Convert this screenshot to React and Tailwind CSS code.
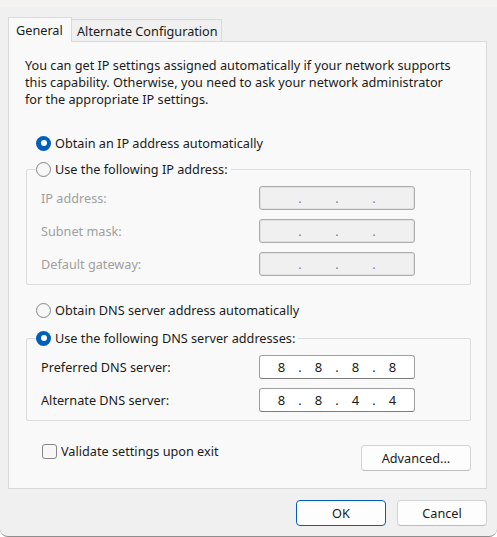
const FONT = "font-['Noto_Sans','DejaVu_Sans',sans-serif] text-[12.7px] leading-[16px] text-[#1b1b1b]";

function Radio({ checked }) {
  return checked ? (
    <span className="w-[15px] h-[15px] rounded-full bg-[#005fb8] flex items-center justify-center shrink-0">
      <span className="w-[6px] h-[6px] rounded-full bg-white" />
    </span>
  ) : (
    <span className="w-[15px] h-[15px] rounded-full border border-[#868686] bg-[#f7f7f7] shrink-0" />
  );
}

function RadioRow({ checked, label }) {
  return (
    <div className="flex items-center gap-[4px] h-[16px]">
      <Radio checked={checked} />
      <span>{label}</span>
    </div>
  );
}

function IpBox({ value, disabled }) {
  const parts = value || ['', '', '', ''];
  return (
    <div
      className={
        'w-[156px] h-[24px] rounded-[3px] border flex items-center justify-center ' +
        (disabled
          ? 'bg-[#f0f0f0] border-[#acacac] shadow-[inset_0_0_0_1px_#e2e2e2]'
          : 'bg-white border-[#9f9f9f] border-b-[#7c7c7c]')
      }
    >
      {parts.map((p, i) => (
        <div key={i} className="flex">
          {i > 0 && (
            <span className={'w-[17px] text-center ' + (disabled ? 'text-[#7a7a9a]' : 'text-[#1b1b1b]')}>.</span>
          )}
          <span className="w-[20px] text-center text-[13px]">{p}</span>
        </div>
      ))}
    </div>
  );
}

function Field({ label, value, disabled }) {
  return (
    <div className="flex items-center">
      <span className={'w-[218px] ' + (disabled ? 'text-[#a0a0a0]' : '')}>{label}</span>
      <IpBox value={value} disabled={disabled} />
    </div>
  );
}

function Group({ legend, checked, children }) {
  return (
    <fieldset className="ml-[17px] w-[445px] border border-[#dcdcdc] rounded-[2px]">
      <legend className="ml-[9px] pr-[3px]">
        <RadioRow checked={checked} label={legend} />
      </legend>
      <div className="pl-[14px] pt-[9px] pb-[8px] flex flex-col gap-[9px]">{children}</div>
    </fieldset>
  );
}

function Button({ children, primary, className = '' }) {
  return (
    <button
      className={
        'h-[26px] rounded-[4px] bg-[#fdfdfd] border flex items-center justify-center ' +
        (primary ? 'border-[#005fb8]' : 'border-[#d3d3d3] border-b-[#bcbcbc]') +
        ' ' +
        className
      }
    >
      {children}
    </button>
  );
}

export default function App() {
  return (
    <div className={'w-[497px] h-[537px] bg-[#f0f0f0] flex flex-col rounded-b-[8px] border-b border-[#8e8e8e] overflow-hidden ' + FONT}>
      <div className="h-[7px] bg-[#f4f3f2]" />

      <div className="flex items-end pl-[8px] pt-[10px]">
        <div className="w-[64px] h-[25px] -mb-[1px] bg-[#f9f9f9] border border-b-0 border-[#d9d9d9] pl-[7px] pt-[4px] relative z-10">
          General
        </div>
        <div className="w-[150px] h-[22px] bg-[#f0f0f0] border border-l-0 border-b-0 border-[#d9d9d9] pl-[5px] pt-[3px] whitespace-nowrap">
          Alternate Configuration
        </div>
      </div>

      <div className="ml-[8px] w-[479px] h-[448px] bg-[#f9f9f9] border border-[#d9d9d9] flex flex-col">
        <p className="pl-[16px] pt-[15px] leading-[17px] whitespace-nowrap">
          You can get IP settings assigned automatically if your network supports
          <br />
          this capability. Otherwise, you need to ask your network administrator
          <br />
          for the appropriate IP settings.
        </p>

        <div className="ml-[27px] mt-[27px]">
          <RadioRow checked label="Obtain an IP address automatically" />
        </div>

        <div className="mt-[10px]">
          <Group legend="Use the following IP address:">
            <Field label="IP address:" disabled />
            <Field label="Subnet mask:" disabled />
            <Field label="Default gateway:" disabled />
          </Group>
        </div>

        <div className="ml-[27px] mt-[17px]">
          <RadioRow label="Obtain DNS server address automatically" />
        </div>

        <div className="mt-[12px]">
          <Group legend="Use the following DNS server addresses:" checked>
            <Field label="Preferred DNS server:" value={['8', '8', '8', '8']} />
            <Field label="Alternate DNS server:" value={['8', '8', '4', '4']} />
          </Group>
        </div>

        <div className="flex justify-between items-start pr-[15px]">
          <div className="ml-[33px] mt-[22px] flex items-center gap-[4px] h-[16px]">
            <span className="w-[15px] h-[15px] rounded-[3px] border border-[#868686] bg-[#f7f7f7]" />
            <span>Validate settings upon exit</span>
          </div>
          <Button className="mt-[24px] w-[110px]">Advanced...</Button>
        </div>
      </div>

      <div className="flex justify-end gap-[11px] pr-[10px] mt-[11px]">
        <Button primary className="w-[90px]">OK</Button>
        <Button className="w-[90px]">Cancel</Button>
      </div>
    </div>
  );
}
